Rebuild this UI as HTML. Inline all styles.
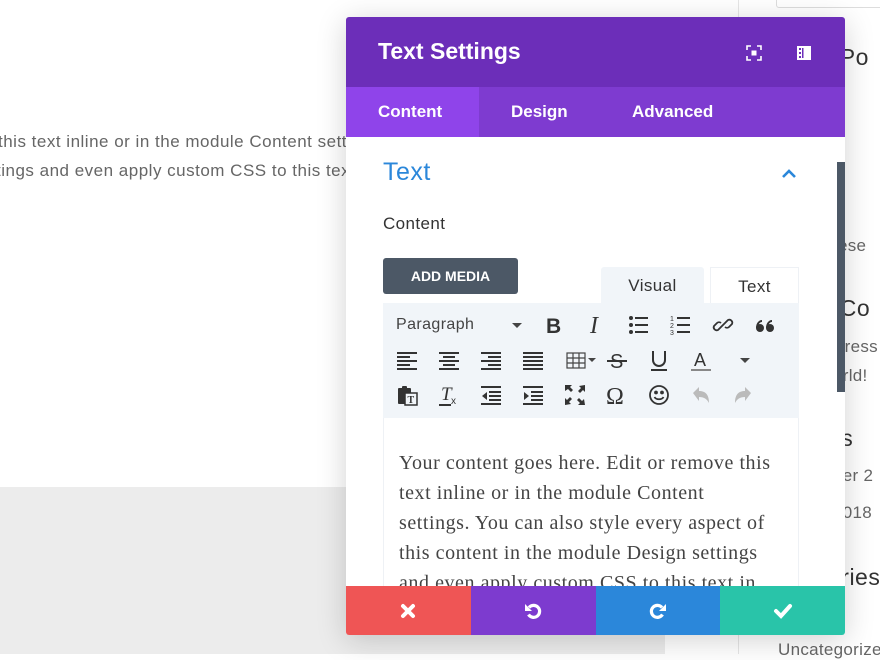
<!DOCTYPE html>
<html><head><meta charset="utf-8"><style>
*{box-sizing:border-box;margin:0;padding:0}
body{width:880px;height:654px;overflow:hidden;background:#fff;font-family:"Liberation Sans",sans-serif;position:relative}
.abs{position:absolute}
.bgtext{color:#666;font-size:17px;letter-spacing:0.5px;white-space:nowrap}
.side{color:#666;font-size:17px;letter-spacing:0.3px;white-space:nowrap}
.sideh{color:#333;font-size:23px;letter-spacing:0.5px;white-space:nowrap}
.modal{left:346px;top:17px;width:499px;height:618px;background:#fff;border-radius:3px;overflow:hidden;box-shadow:0 5px 30px rgba(0,0,0,.18)}
.hdr{left:0;top:0;width:499px;height:70px;background:#6c2eb9;color:#fff}
.tabs{left:0;top:70px;width:499px;height:50px;background:#7e3bd0;color:#fff;font-weight:bold;font-size:17px}
.tb{position:absolute;top:0;height:50px;line-height:50px}
.ic{position:absolute;width:24px;height:24px}
</style></head><body>
<div class="abs bgtext" style="left:-2px;top:132px">this text inline or in the module Content settings. You can</div>
<div class="abs bgtext" style="left:-4px;top:161px">tings and even apply custom CSS to this text in the</div>
<div class="abs" style="left:0;top:487px;width:665px;height:167px;background:#ececec"></div>
<div class="abs" style="left:738px;top:0;width:1px;height:654px;background:#e6e6e6"></div>
<div class="abs" style="left:776px;top:-4px;width:110px;height:12px;border:1px solid #ddd;border-radius:3px"></div>
<div class="abs sideh" style="left:826px;top:44px">t Po</div>
<div class="abs side" style="left:838px;top:236px">ese</div>
<div class="abs sideh" style="left:826px;top:295px">t Co</div>
<div class="abs side" style="left:833px;top:337px">Press</div>
<div class="abs side" style="left:833px;top:366px">orld!</div>
<div class="abs sideh" style="left:828px;top:425px">es</div>
<div class="abs side" style="left:833px;top:466px">ber 2</div>
<div class="abs side" style="left:833px;top:503px">2018</div>
<div class="abs sideh" style="left:828px;top:564px">ories</div>
<div class="abs side" style="left:778px;top:640px">Uncategorized</div>

<div class="abs modal">
 <div class="abs hdr">
  <div class="abs" style="left:32px;top:21px;font-size:23px;font-weight:bold">Text Settings</div>
  <svg class="abs" style="left:400px;top:28px" width="16" height="16" viewBox="0 0 16 16" fill="none" stroke="#fff" stroke-width="1.6"><path d="M1 5V1h4M11 1h4v4M15 11v4h-4M5 15H1v-4"/><rect x="5.5" y="5.5" width="5" height="5" fill="#fff" stroke="none"/></svg>
  <svg class="abs" style="left:450px;top:28px" width="16" height="16" viewBox="0 0 16 16"><rect x="1" y="1" width="14" height="14" fill="#fff"/><rect x="6" y="3" width="1.5" height="10" fill="#6c2eb9"/><rect x="3" y="3" width="2" height="2" fill="#6c2eb9"/><rect x="3" y="7" width="2" height="2" fill="#6c2eb9"/><rect x="3" y="11" width="2" height="2" fill="#6c2eb9"/></svg>
 </div>
 <div class="abs tabs">
  <div class="tb" style="left:0;width:133px;background:#8f44ea;padding-left:32px">Content</div>
  <div class="tb" style="left:165px">Design</div>
  <div class="tb" style="left:286px">Advanced</div>
 </div>
 <div class="abs" style="left:37px;top:141px;color:#2b87da;font-size:25px;letter-spacing:0.5px">Text</div>
 <svg class="abs" style="left:435px;top:152px" width="16" height="10" viewBox="0 0 16 10" fill="none" stroke="#2b87da" stroke-width="2.6"><path d="M2 8l6-6 6 6"/></svg>
 <div class="abs" style="left:491px;top:145px;width:8px;height:230px;background:#4c5866"></div>
 <div class="abs" style="left:37px;top:197px;color:#333;font-size:17px;letter-spacing:0.4px">Content</div>
 <div class="abs" style="left:37px;top:241px;width:135px;height:36px;background:#4c5866;border-radius:3px;color:#fff;font-weight:bold;font-size:14px;text-align:center;line-height:36px">ADD MEDIA</div>
 <div class="abs" style="left:255px;top:250px;width:103px;height:37px;background:#f1f5f9;color:#333;font-size:17px;letter-spacing:0.4px;text-align:center;line-height:38px;border-radius:3px 3px 0 0">Visual</div>
 <div class="abs" style="left:364px;top:250px;width:89px;height:37px;border:1px solid #eef1f5;border-bottom:none;color:#333;font-size:17px;letter-spacing:0.4px;text-align:center;line-height:38px">Text</div>
 <div class="abs" style="left:37px;top:286px;width:416px;height:115px;background:#f1f5f9">
  <div class="abs" style="left:13px;top:13px;font-size:16px;letter-spacing:0.4px;color:#444">Paragraph</div>
  <div class="abs" style="left:129px;top:20px;border:5px solid transparent;border-top-color:#444"></div>
  <svg class="ic" style="left:160px;top:10px" viewBox="0 0 24 24"><text x="3" y="20" font-family="Liberation Sans" font-weight="bold" font-size="21" fill="#333">B</text></svg>
  <svg class="ic" style="left:202px;top:10px" viewBox="0 0 24 24"><text x="5" y="20" font-family="Liberation Serif" font-style="italic" font-size="24" fill="#333">I</text></svg>
  <svg class="ic" style="left:244px;top:10px" viewBox="0 0 24 24" fill="#333"><circle cx="4" cy="5" r="2"/><circle cx="4" cy="12" r="2"/><circle cx="4" cy="19" r="2"/><rect x="8" y="4" width="13" height="2"/><rect x="8" y="11" width="13" height="2"/><rect x="8" y="18" width="13" height="2"/></svg>
  <svg class="ic" style="left:286px;top:10px" viewBox="0 0 24 24" fill="#333"><text x="1" y="8" font-size="7" font-family="Liberation Sans">1</text><text x="1" y="15" font-size="7" font-family="Liberation Sans">2</text><text x="1" y="22" font-size="7" font-family="Liberation Sans">3</text><rect x="8" y="4" width="13" height="2"/><rect x="8" y="11" width="13" height="2"/><rect x="8" y="18" width="13" height="2"/></svg>
  <svg class="ic" style="left:328px;top:10px" viewBox="0 0 24 24" fill="none" stroke="#333" stroke-width="1.8"><path d="M10 14l-3 3a3 3 0 01-4-4l3-3a3 3 0 014 0M14 10l3-3a3 3 0 014 4l-3 3a3 3 0 01-4 0M9 15l6-6"/></svg>
  <svg class="ic" style="left:370px;top:10px" viewBox="0 0 24 24" fill="#333"><circle cx="7" cy="15" r="4"/><circle cx="17" cy="15" r="4"/><path d="M3 15c0-5 3-8 6-8v2c-2 0-4 2-4 6zM13 15c0-5 3-8 6-8v2c-2 0-4 2-4 6z"/></svg>
  <svg class="ic" style="left:12px;top:45px" viewBox="0 0 24 24" fill="#333"><rect x="2" y="4" width="20" height="2"/><rect x="2" y="8" width="13" height="2"/><rect x="2" y="12" width="20" height="2"/><rect x="2" y="16" width="13" height="2"/><rect x="2" y="20" width="20" height="2"/></svg>
  <svg class="ic" style="left:54px;top:45px" viewBox="0 0 24 24" fill="#333"><rect x="2" y="4" width="20" height="2"/><rect x="6" y="8" width="12" height="2"/><rect x="2" y="12" width="20" height="2"/><rect x="6" y="16" width="12" height="2"/><rect x="2" y="20" width="20" height="2"/></svg>
  <svg class="ic" style="left:96px;top:45px" viewBox="0 0 24 24" fill="#333"><rect x="2" y="4" width="20" height="2"/><rect x="9" y="8" width="13" height="2"/><rect x="2" y="12" width="20" height="2"/><rect x="9" y="16" width="13" height="2"/><rect x="2" y="20" width="20" height="2"/></svg>
  <svg class="ic" style="left:138px;top:45px" viewBox="0 0 24 24" fill="#333"><rect x="2" y="4" width="20" height="2"/><rect x="2" y="8" width="20" height="2"/><rect x="2" y="12" width="20" height="2"/><rect x="2" y="16" width="20" height="2"/><rect x="2" y="20" width="20" height="2"/></svg>
  <svg class="ic" style="left:182px;top:45px;width:34px" viewBox="0 0 34 24" fill="none" stroke="#444" stroke-width="1.2"><rect x="2" y="5" width="18" height="15"/><path d="M2 10h18M2 15h18M8 5v15M14 5v15"/><path d="M23 10h8l-4 4z" fill="#444" stroke="none"/></svg>
  <svg class="ic" style="left:222px;top:45px" viewBox="0 0 24 24"><text x="5" y="20" font-size="20" font-family="Liberation Sans" fill="#333">S</text><rect x="2" y="12" width="20" height="2" fill="#333"/></svg>
  <svg class="ic" style="left:264px;top:45px" viewBox="0 0 24 24" fill="none" stroke="#333" stroke-width="2"><path d="M6 3v9a6 6 0 0012 0V3"/><path d="M4 22h16"/></svg>
  <svg class="ic" style="left:306px;top:45px" viewBox="0 0 24 24"><text x="5" y="18" font-size="18" font-family="Liberation Sans" fill="#333">A</text><rect x="2" y="21" width="20" height="2" fill="#888"/></svg>
  <div class="abs" style="left:357px;top:55px;border:5px solid transparent;border-top-color:#444"></div>
  <svg class="ic" style="left:12px;top:80px" viewBox="0 0 24 24" fill="#333"><rect x="3" y="5" width="13" height="16" rx="1"/><rect x="7" y="3" width="5" height="4" rx="1"/><rect x="10" y="10" width="12" height="12" fill="#f1f5f9" stroke="#333" stroke-width="1.5"/><text x="12.5" y="20" font-size="10" font-family="Liberation Serif" font-weight="bold">T</text></svg>
  <svg class="ic" style="left:54px;top:80px" viewBox="0 0 24 24"><text x="4" y="17" font-size="19" font-style="italic" font-family="Liberation Serif" fill="#333">T</text><text x="14" y="21" font-size="10" font-family="Liberation Sans" fill="#333">x</text><rect x="2" y="21" width="12" height="2" fill="#333"/></svg>
  <svg class="ic" style="left:96px;top:80px" viewBox="0 0 24 24" fill="#333"><rect x="2" y="3" width="20" height="2"/><rect x="10" y="8" width="12" height="2"/><rect x="10" y="12" width="12" height="2"/><rect x="10" y="16" width="12" height="2"/><rect x="2" y="20" width="20" height="2"/><path d="M8 9v8l-5-4z"/></svg>
  <svg class="ic" style="left:138px;top:80px" viewBox="0 0 24 24" fill="#333"><rect x="2" y="3" width="20" height="2"/><rect x="10" y="8" width="12" height="2"/><rect x="10" y="12" width="12" height="2"/><rect x="10" y="16" width="12" height="2"/><rect x="2" y="20" width="20" height="2"/><path d="M3 9v8l5-4z"/></svg>
  <svg class="ic" style="left:180px;top:80px" viewBox="0 0 24 24" fill="#333"><path d="M2 2h7l-2 2 3 3-2 2-3-3-3 2zM22 2v7l-2-2-3 3-2-2 3-3-2-2zM2 22v-7l2 2 3-3 2 2-3 3 2 2zM22 22h-7l2-2-3-3 2-2 3 3 2-2z"/></svg>
  <svg class="ic" style="left:222px;top:80px" viewBox="0 0 24 24"><text x="1" y="21" font-size="24" font-family="Liberation Serif" fill="#333">Ω</text></svg>
  <svg class="ic" style="left:264px;top:80px" viewBox="0 0 24 24" fill="none" stroke="#333" stroke-width="1.8"><circle cx="12" cy="12" r="9"/><path d="M7.5 14c1.5 3 7.5 3 9 0"/><circle cx="9" cy="9.5" r="1" fill="#333"/><circle cx="15" cy="9.5" r="1" fill="#333"/></svg>
  <svg class="ic" style="left:306px;top:80px" viewBox="0 0 24 24" fill="#bbb"><path d="M4 10l6-6v4c6 0 10 3 10 12-2-4-5-6-10-6v4z"/></svg>
  <svg class="ic" style="left:348px;top:80px" viewBox="0 0 24 24" fill="#bbb"><path d="M20 10l-6-6v4C8 8 4 11 4 20c2-4 5-6 10-6v4z"/></svg>
 </div>
 <div class="abs" style="left:37px;top:401px;width:416px;height:200px;border:1px solid #eef1f5;border-top:none;font-family:'Liberation Serif',serif;font-size:20px;letter-spacing:0.55px;line-height:30px;color:#444;padding:30px 25px 0 15px">Your content goes here. Edit or remove this text inline or in the module Content settings. You can also style every aspect of this content in the module Design settings and even apply custom CSS to this text in</div>
 <div class="abs" style="left:0;top:569px;width:499px;height:49px;display:flex;color:#fff">
  <div style="flex:1;background:#ef5555;display:flex;align-items:center;justify-content:center"><svg width="16" height="16" viewBox="0 0 16 16" stroke="#fff" stroke-width="4" stroke-linecap="round"><path d="M3 3l10 10M13 3L3 13"/></svg></div>
  <div style="flex:1;background:#7d3bcf;display:flex;align-items:center;justify-content:center"><svg width="20" height="20" viewBox="0 0 20 20" fill="none" stroke="#fff" stroke-width="3.2"><path d="M6 6.5a6 6 0 11-0.5 7"/><path d="M2 3v7h7z" fill="#fff" stroke="none"/></svg></div>
  <div style="flex:1;background:#2b87da;display:flex;align-items:center;justify-content:center"><svg width="20" height="20" viewBox="0 0 20 20" fill="none" stroke="#fff" stroke-width="3.2"><path d="M14 6.5a6 6 0 10 0.5 7"/><path d="M18 3v7h-7z" fill="#fff" stroke="none"/></svg></div>
  <div style="flex:1;background:#29c4a9;display:flex;align-items:center;justify-content:center"><svg width="20" height="16" viewBox="0 0 20 16" fill="none" stroke="#fff" stroke-width="4" stroke-linecap="round"><path d="M3 8l5 5 9-10"/></svg></div>
 </div>
</div>
</body></html>
